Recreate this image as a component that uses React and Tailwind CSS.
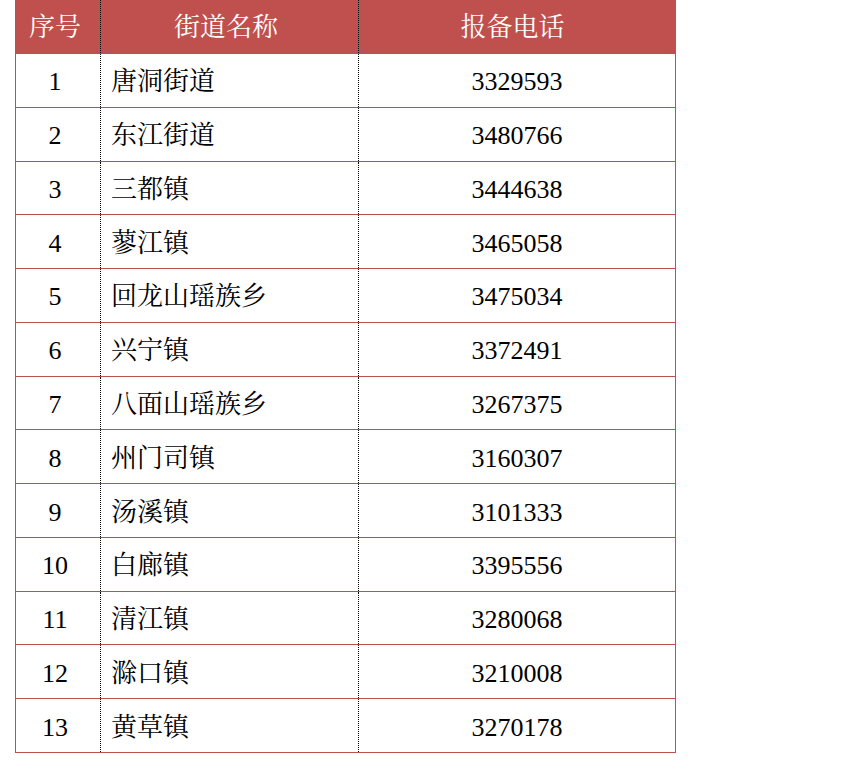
import React from 'react';

const rows = [
  ['1', '唐洞街道', '3329593'],
  ['2', '东江街道', '3480766'],
  ['3', '三都镇', '3444638'],
  ['4', '蓼江镇', '3465058'],
  ['5', '回龙山瑶族乡', '3475034'],
  ['6', '兴宁镇', '3372491'],
  ['7', '八面山瑶族乡', '3267375'],
  ['8', '州门司镇', '3160307'],
  ['9', '汤溪镇', '3101333'],
  ['10', '白廊镇', '3395556'],
  ['11', '清江镇', '3280068'],
  ['12', '滁口镇', '3210008'],
  ['13', '黄草镇', '3270178'],
];

const font = { fontFamily: '"Liberation Serif", "Noto Serif CJK SC", "Noto Sans CJK SC", serif' };

export default function App() {
  return (
    <div className="w-[852px] h-[780px] bg-white text-black" style={font}>
      <div className="ml-[15px] w-[661px] border-x border-[#c0504d]">
        {/* Header */}
        <div className="grid grid-cols-[85px_258px_1fr] h-[54px] bg-[#c0504d] text-white text-[26px] leading-none border-b border-[#c0504d]">
          <div className="flex items-center justify-center pt-[3px] pr-[6px] border-r border-dotted border-black">序号</div>
          <div className="flex items-center justify-center pt-[3px] pr-[7px] border-r border-dotted border-black">街道名称</div>
          <div className="flex items-center justify-center pt-[3px] pr-[9px]">报备电话</div>
        </div>

        {/* Rows */}
        {rows.map(([no, name, phone]) => (
          <div
            key={no}
            className="grid grid-cols-[85px_258px_1fr] h-[53.77px] text-[26px] leading-none border-b border-[#c0504d]"
          >
            <div className="flex items-center justify-center pt-[4px] pr-[6px] border-r border-dotted border-black">{no}</div>
            <div className="flex items-center pt-[4px] pl-[10px] border-r border-dotted border-black">{name}</div>
            <div className="flex items-center justify-center pt-[4px]">{phone}</div>
          </div>
        ))}
      </div>
    </div>
  );
}
